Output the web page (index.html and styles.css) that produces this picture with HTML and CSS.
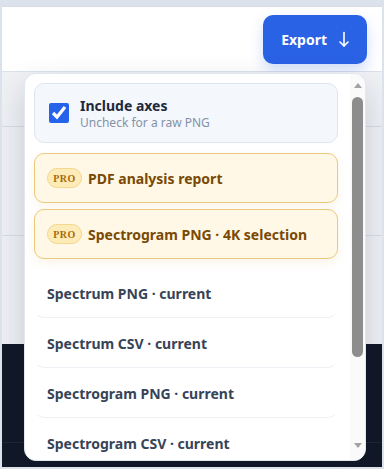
FILE: index.html
```html
<!DOCTYPE html>
<html lang="en">
<head>
<meta charset="UTF-8">
<meta name="viewport" content="width=device-width, initial-scale=1.0">
<title>Spectrum Export</title>
<link rel="stylesheet" href="styles.css">
</head>
<body>

<div class="frame">
    <header class="topbar">
        <button type="button" class="export-btn">
            Export
            <svg width="10" height="17" viewBox="0 0 10 17" fill="none" stroke="#fff" stroke-width="1.6" stroke-linecap="round" stroke-linejoin="round">
                <path d="M5 1.5v13.5"/>
                <path d="M1 11l4 4 4-4"/>
            </svg>
        </button>
    </header>

    <main class="workspace">
        <div class="band band-a"></div>
        <div class="band band-b"></div>
        <div class="band band-c"></div>
        <div class="console">
            <div class="console-line"></div>
        </div>
    </main>

    <div class="export-menu">
        <div class="menu-list">
            <label class="axes-card">
                <input type="checkbox" checked>
                <span class="axes-text">
                    <span class="axes-title">Include axes</span>
                    <span class="axes-sub">Uncheck for a raw PNG</span>
                </span>
            </label>

            <div class="pro-group">
                <button type="button" class="menu-item pro-item"><span class="pro-badge">PRO</span>PDF analysis report</button>
                <button type="button" class="menu-item pro-item"><span class="pro-badge">PRO</span>Spectrogram PNG · 4K selection</button>
            </div>

            <button type="button" class="menu-item">Spectrum PNG · current</button>
            <button type="button" class="menu-item">Spectrum CSV · current</button>
            <button type="button" class="menu-item">Spectrogram PNG · current</button>
            <button type="button" class="menu-item">Spectrogram CSV · current</button>
        </div>
        <div class="scrollbar">
            <span class="arrow-up"></span>
            <span class="thumb"></span>
            <span class="arrow-down"></span>
        </div>
    </div>
</div>

</body>
</html>
```

FILE: styles.css
```css
* {
    box-sizing: border-box;
}
body {
    margin: 0;
    background-color: #dbe2eb;
    font-family: "Noto Sans", "Open Sans", Arial, sans-serif;
}
.frame {
    position: relative;
    margin: 6px 2px 0;
    height: 461px;
    overflow: hidden;
    display: flex;
    flex-direction: column;
}
.topbar {
    height: 66px;
    flex: none;
    background-color: #fff;
    border-top: 1px solid #d6dde7;
    border-bottom: 1px solid #dde3eb;
    display: flex;
    align-items: center;
    justify-content: flex-end;
    padding-right: 15px;
}
.export-btn {
    display: flex;
    align-items: center;
    gap: 12px;
    height: 49px;
    padding: 0 18px;
    border: none;
    border-radius: 10px;
    background-color: #2a62e6;
    color: #fff;
    font-family: inherit;
    font-size: 14px;
    font-weight: 700;
    box-shadow: 0 6px 14px rgba(37, 99, 235, 0.22);
    cursor: pointer;
}
.workspace {
    flex: 1;
    display: flex;
    flex-direction: column;
    background-color: #eff1f5;
}
.band {
    border-bottom: 1px solid #d7dee8;
}
.band-a {
    height: 55px;
}
.band-b {
    height: 109px;
}
.band-c {
    height: 108px;
    border-bottom: none;
}
.console {
    flex: 1;
    background-color: #111827;
    padding-top: 98px;
}
.console-line {
    border-top: 1px solid #1e2636;
}

.export-menu {
    position: absolute;
    top: 67px;
    left: 22px;
    width: 342px;
    height: 388px;
    display: flex;
    overflow: hidden;
    background-color: #fff;
    border: 1px solid #e2e7ee;
    border-radius: 12px;
    box-shadow: 0 14px 32px rgba(15, 23, 42, 0.18);
}
.menu-list {
    flex: 1;
    min-width: 0;
    overflow: hidden;
    padding: 9px 12px 9px 9px;
}
.scrollbar {
    width: 15px;
    flex: none;
    display: flex;
    flex-direction: column;
    align-items: center;
    padding: 9px 0 12px;
    background-color: #fafafa;
}
.arrow-up,
.arrow-down {
    width: 0;
    height: 0;
    border-left: 4.5px solid transparent;
    border-right: 4.5px solid transparent;
}
.arrow-up {
    border-bottom: 5px solid #a3a3a3;
}
.arrow-down {
    margin-top: auto;
    border-top: 5px solid #a3a3a3;
}
.thumb {
    width: 11px;
    height: 260px;
    margin-top: 9px;
    border-radius: 6px;
    background-color: #8d8d8d;
}
.axes-card {
    height: 60px;
    display: flex;
    align-items: center;
    gap: 11px;
    padding: 0 14px;
    margin-bottom: 10px;
    background-color: #f4f7fc;
    border: 1px solid #dfe5ee;
    border-radius: 10px;
}
.axes-card input {
    width: 20px;
    height: 20px;
    margin: 0;
    accent-color: #2563eb;
}
.axes-text {
    display: flex;
    flex-direction: column;
}
.axes-title {
    font-size: 14px;
    font-weight: 700;
    color: #1e293b;
    line-height: 19px;
}
.axes-sub {
    font-size: 12px;
    color: #8592a6;
    line-height: 16px;
}
.pro-group {
    display: flex;
    flex-direction: column;
    gap: 6px;
    margin-bottom: 9px;
}
.menu-item {
    display: flex;
    align-items: center;
    width: 100%;
    height: 50px;
    padding: 0 12px;
    background: none;
    border: 1px solid transparent;
    border-bottom-color: #edf0f5;
    border-radius: 10px;
    font-family: inherit;
    font-size: 14px;
    font-weight: 700;
    color: #374357;
    text-align: left;
    cursor: pointer;
}
.pro-item {
    background-color: #fff8e7;
    border: 1px solid #ebc87e;
    color: #7a4904;
    box-shadow: 0 4px 10px rgba(217, 160, 40, 0.1);
}
.pro-badge {
    display: inline-flex;
    align-items: center;
    justify-content: center;
    width: 35px;
    height: 20px;
    margin-right: 6px;
    background-color: #fdebb8;
    border: 1px solid #f4d68e;
    border-radius: 10px;
    font-family: "Liberation Serif", "DejaVu Serif", serif;
    font-size: 10px;
    font-weight: 700;
    letter-spacing: 0.5px;
    color: #a66a0c;
}
```
